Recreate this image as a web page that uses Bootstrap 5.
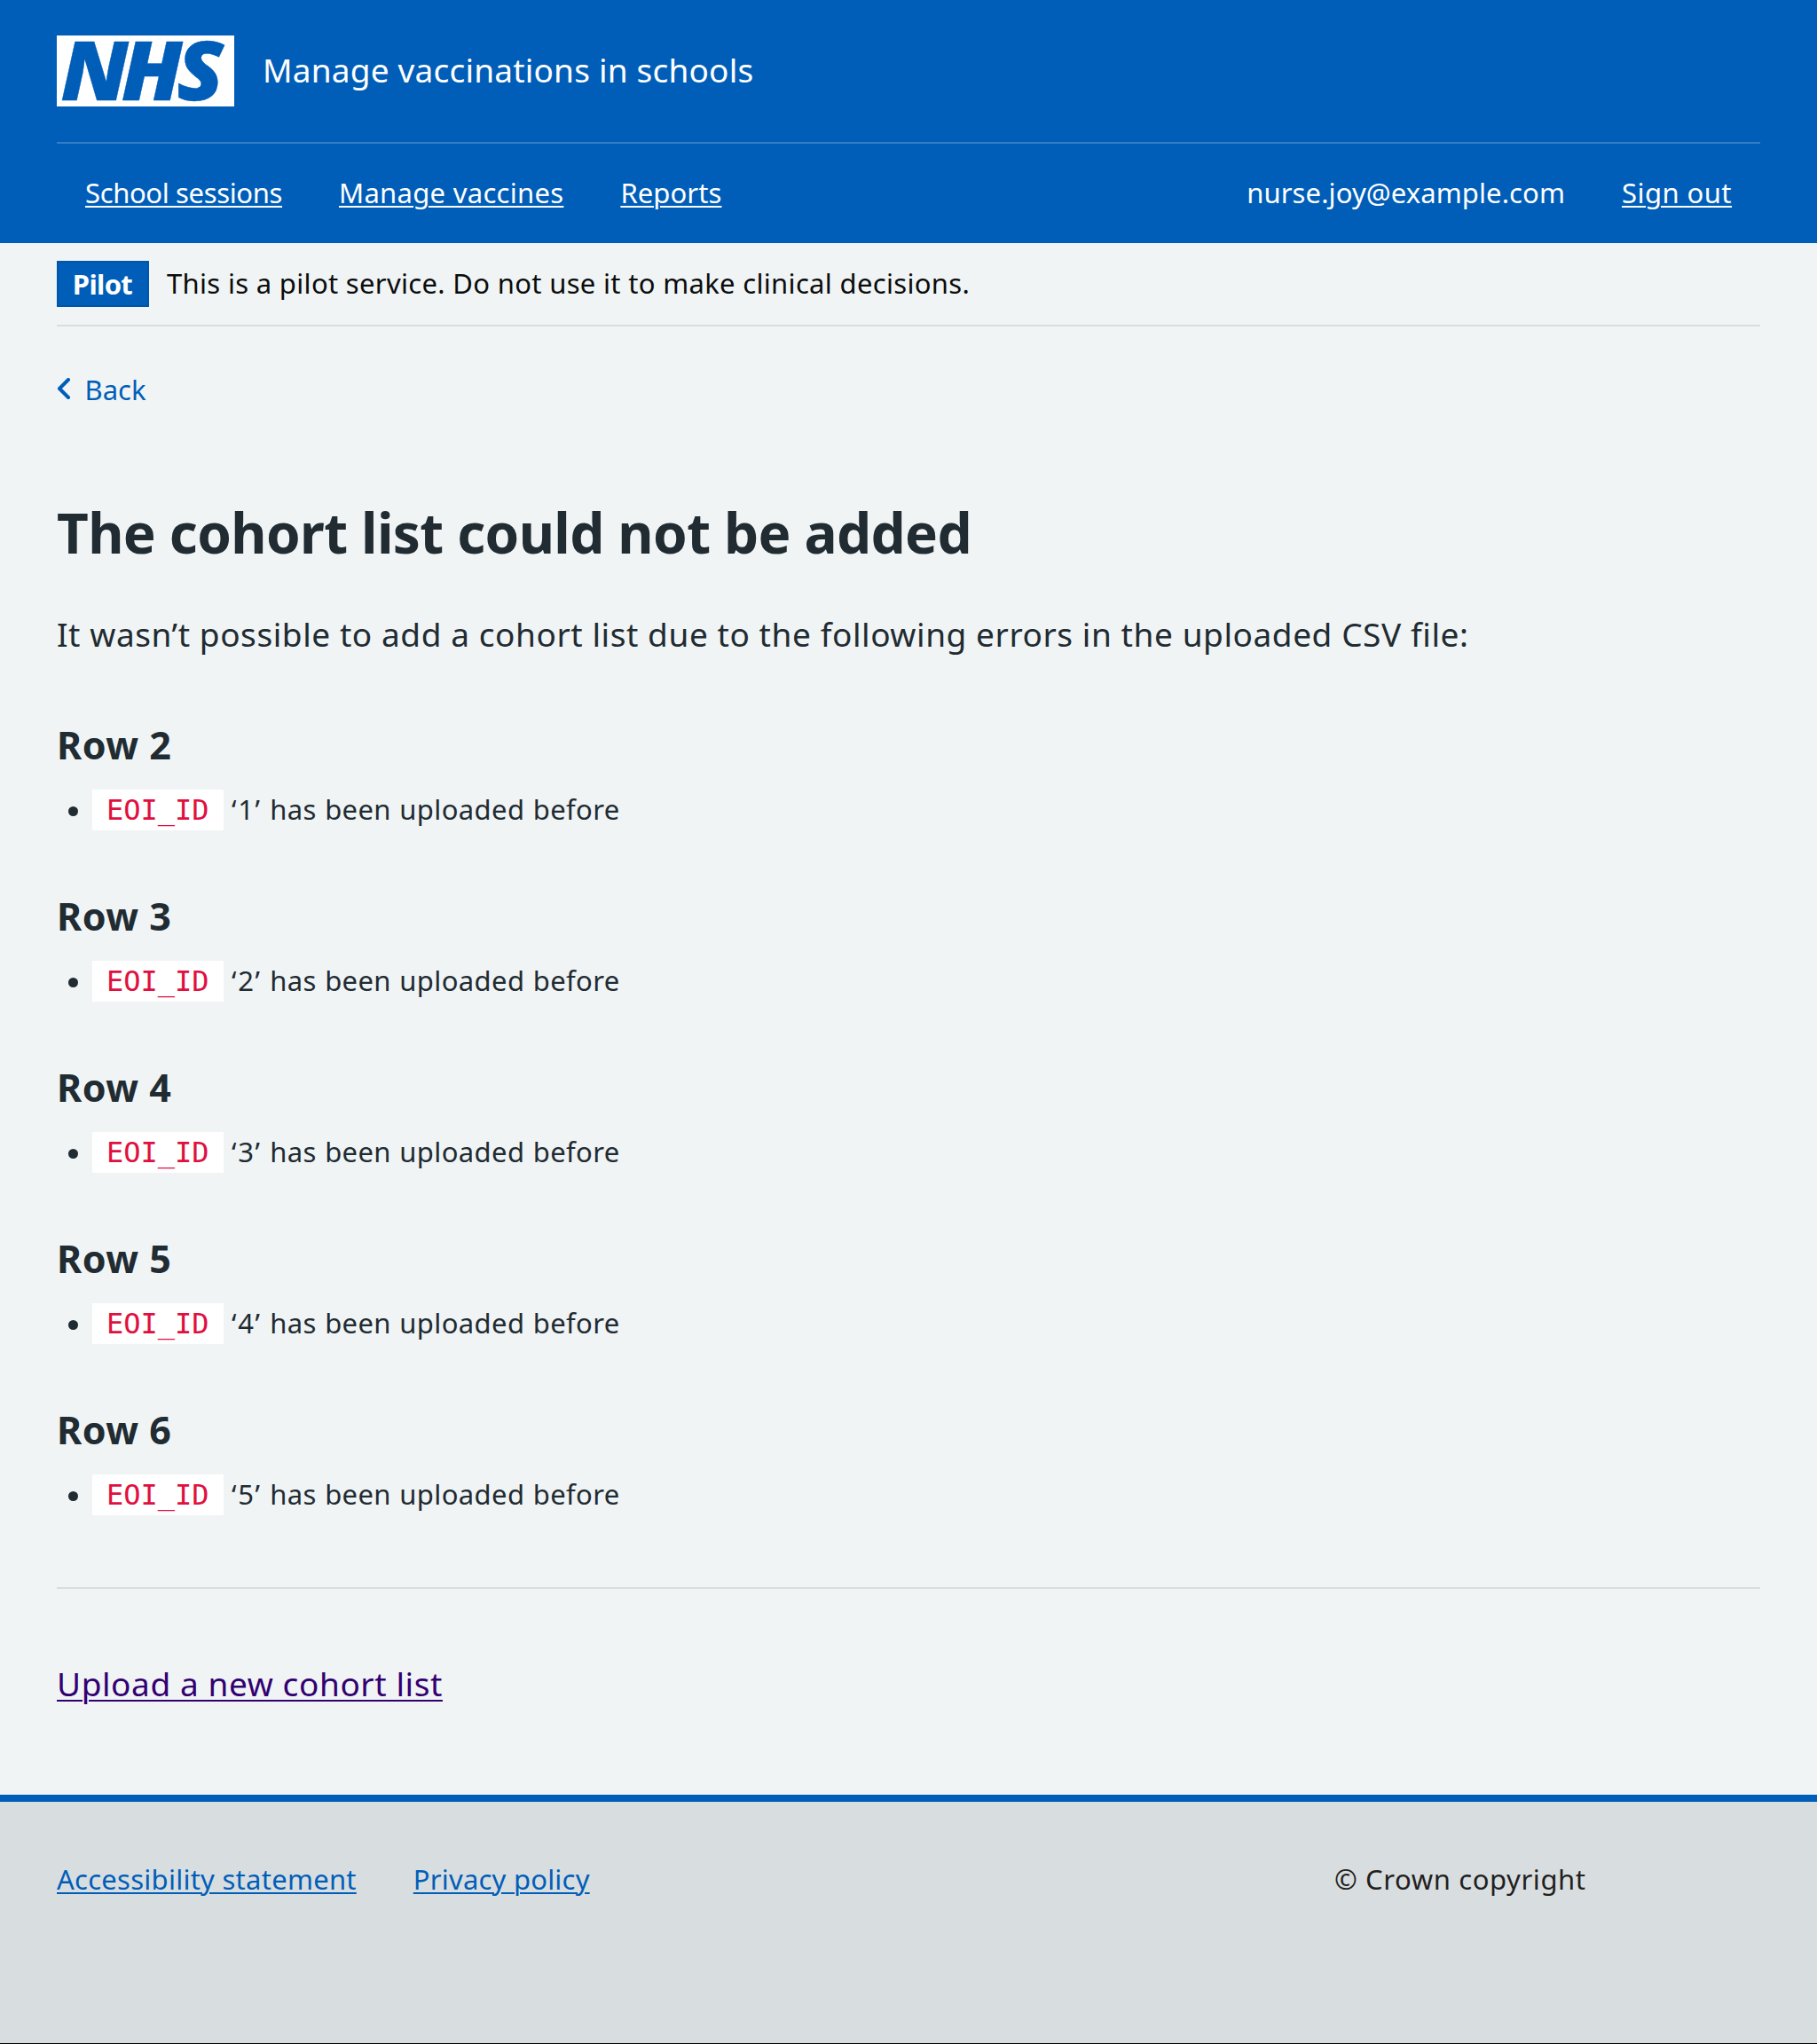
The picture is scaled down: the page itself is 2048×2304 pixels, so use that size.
<!DOCTYPE html>
<html lang="en">
<head>
<meta charset="utf-8">
<meta name="viewport" content="width=device-width, initial-scale=1">
<title>The cohort list could not be added</title>
<link rel="stylesheet" href="https://cdn.jsdelivr.net/npm/bootstrap@5.3.0/dist/css/bootstrap.min.css">
<style>
  :root { --nhs-blue: #005eb8; --nhs-text: #212b32; --nhs-line: #d8dde0; }
  body { font-family: "Noto Sans", "Open Sans", sans-serif; font-size: 31px; line-height: 48px; letter-spacing: .6px; color: var(--nhs-text); background: #f0f4f5; }
  a { text-decoration-thickness: 2px; text-underline-offset: 3px; }
  .wrap { padding: 0 64px; }
  .site-header { background: var(--nhs-blue); height: 274px; }
  .brand-row { height: 160px; }
  .logo { width: 200px; height: 80px; margin-right: 32px; overflow: visible; }
  .logo text { font: italic 800 92px "Open Sans", "Noto Sans", sans-serif; letter-spacing: 0; fill: var(--nhs-blue); stroke: var(--nhs-blue); stroke-width: .4px; }
  .service-name { font-size: 37px; letter-spacing: .2px; padding-bottom: 3px; }
  .main-nav { height: 114px; border-top: 2px solid rgba(255,255,255,.2); padding: 0 32px 2px; }
  .main-nav .nav { gap: 64px; }
  .main-nav a { color: #fff; }
  .pilot { padding: 20px 0; border-bottom: 2px solid var(--nhs-line); color: #0b0c0c; gap: 20px; letter-spacing: .32px; }
  .pilot-tag { width: 104px; height: 52px; background: var(--nhs-blue); border: 2px solid #0056a8; letter-spacing: -.65px; padding-right: 1px; }
  .pilot-text { padding-bottom: 2px; }
  .back-link { color: var(--nhs-blue); margin-top: 47px; letter-spacing: 0; gap: 15.5px; }
  h1 { font-size: 62px; font-weight: 700; line-height: 72px; letter-spacing: -.61px; margin: 101px 0 50px; }
  .intro { font-size: 37px; line-height: 57px; letter-spacing: .577px; margin-bottom: 68px; }
  h3 { font-size: 43px; font-weight: 700; line-height: 57px; letter-spacing: .5px; margin-bottom: 20px; }
  .errors { padding-left: 12.5px; margin-bottom: 68px; }
  .errors li::before { content: ""; display: inline-block; width: 11px; height: 11px; border-radius: 50%; background: currentColor; vertical-align: 4px; margin-right: 16.5px; }
  .errors li { height: 48px; white-space: nowrap; letter-spacing: .38px; word-spacing: 1px; }
  .errors .quoted { letter-spacing: 1.7px; }
  .errors code { font: 32px/38px "DejaVu Sans Mono", monospace; letter-spacing: 0; color: #e0103f; background: #fff; padding: 4px 16px; }
  .rule { height: 2px; background: var(--nhs-line); margin: 81px 0 78px; }
  .upload { font-size: 37px; line-height: 57px; letter-spacing: .59px; margin-bottom: 97px; }
  .upload a { color: #330072; text-underline-offset: 4px; }
  .site-footer { background: var(--nhs-line); border-top: 8px solid var(--nhs-blue); border-bottom: 1px solid #000; height: 281px; padding-top: 63px; color: #231f20; }
  .site-footer a { color: var(--nhs-blue); }
  .site-footer .nav { gap: 64px; }
  .t1 { letter-spacing: -.36px; } .t2 { letter-spacing: .287px; } .t3 { letter-spacing: .09px; }
  .t4 { letter-spacing: .1px; } .t5 { letter-spacing: .45px; } .t6 { letter-spacing: .26px; } .t7 { letter-spacing: .21px; }
</style>
</head>
<body>
<header class="site-header wrap text-white">
  <div class="brand-row d-flex align-items-center">
    <svg class="logo" viewBox="0 0 200 80" role="img" aria-label="NHS">
      <rect width="200" height="80" fill="#fff"/>
      <text transform="translate(0 72.7) scale(1.05 1)" x="4.2 69.3 128.8" y="0">NHS</text>
    </svg>
    <span class="service-name">Manage vaccinations in schools</span>
  </div>
  <nav class="main-nav d-flex align-items-center justify-content-between">
    <div class="nav">
      <a class="t1" href="#">School sessions</a>
      <a class="t2" href="#">Manage vaccines</a>
      <a class="t3" href="#">Reports</a>
    </div>
    <div class="nav">
      <span class="t4">nurse.joy@example.com</span>
      <a class="t5" href="#">Sign out</a>
    </div>
  </nav>
</header>

<div class="wrap">
  <div class="pilot d-flex align-items-center">
    <strong class="pilot-tag d-flex align-items-center justify-content-center text-white fw-bold">Pilot</strong>
    <span class="pilot-text">This is a pilot service. Do not use it to make clinical decisions.</span>
  </div>
  <a class="back-link d-flex align-items-center text-decoration-none" href="#">
    <svg width="16" height="26" viewBox="0 0 16 26" fill="none" stroke="currentColor" stroke-width="4" stroke-linecap="round" stroke-linejoin="round"><path d="M13 2 3 12l10 10"/></svg>
    <span>Back</span>
  </a>
  <main>
    <h1>The cohort list could not be added</h1>
    <p class="intro">It wasn’t possible to add a cohort list due to the following errors in the uploaded CSV file:</p>
    <h3>Row 2</h3>
    <ul class="errors list-unstyled"><li><code>EOI_ID</code> <span class="quoted">‘1’</span> has been uploaded before</li></ul>
    <h3>Row 3</h3>
    <ul class="errors list-unstyled"><li><code>EOI_ID</code> <span class="quoted">‘2’</span> has been uploaded before</li></ul>
    <h3>Row 4</h3>
    <ul class="errors list-unstyled"><li><code>EOI_ID</code> <span class="quoted">‘3’</span> has been uploaded before</li></ul>
    <h3>Row 5</h3>
    <ul class="errors list-unstyled"><li><code>EOI_ID</code> <span class="quoted">‘4’</span> has been uploaded before</li></ul>
    <h3>Row 6</h3>
    <ul class="errors list-unstyled"><li><code>EOI_ID</code> <span class="quoted">‘5’</span> has been uploaded before</li></ul>
    <div class="rule"></div>
    <p class="upload"><a href="#">Upload a new cohort list</a></p>
  </main>
</div>

<footer class="site-footer wrap">
  <div class="row g-0">
    <div class="col-9 nav">
      <a class="t6" href="#">Accessibility statement</a>
      <a class="t7" href="#">Privacy policy</a>
    </div>
    <div class="col-3">© Crown copyright</div>
  </div>
</footer>
<script src="https://cdn.jsdelivr.net/npm/bootstrap@5.3.0/dist/js/bootstrap.bundle.min.js"></script>
</body>
</html>
